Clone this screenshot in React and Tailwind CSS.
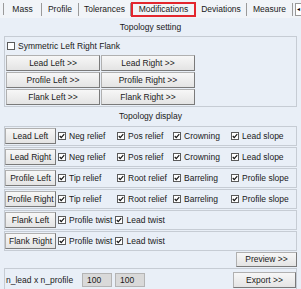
import React from 'react';

const Check = ({ checked = true }) => (
    <span className="w-[8px] h-[8px] border border-[#5a5a5a] bg-white flex items-center justify-center shrink-0">
        {checked && (
            <svg viewBox="0 0 8 8" className="w-[6px] h-[6px]">
                <path d="M1 4 L3 6.2 L7 1.5" stroke="#111" strokeWidth="1.5" fill="none" />
            </svg>
        )}
    </span>
);

const Btn = ({ children, className = '' }) => (
    <div
        className={`flex items-center justify-center bg-gradient-to-b from-[#f7f7f7] to-[#e4e4e4] border border-[#b0b0b0] border-r-[#7a7a7a] border-b-[#7a7a7a] text-[#1a1a1a] whitespace-nowrap ${className}`}
    >
        {children}
    </div>
);

const Item = ({ label }) => (
    <div className="flex items-center gap-[3px] whitespace-nowrap">
        <Check />
        <span>{label}</span>
    </div>
);

const rows = [
    { label: 'Lead Left', items: ['Neg relief', 'Pos relief', 'Crowning', 'Lead slope'] },
    { label: 'Lead Right', items: ['Neg relief', 'Pos relief', 'Crowning', 'Lead slope'] },
    { label: 'Profile Left', items: ['Tip relief', 'Root relief', 'Barreling', 'Profile slope'] },
    { label: 'Profile Right', items: ['Tip relief', 'Root relief', 'Barreling', 'Profile slope'] },
    { label: 'Flank Left', flank: true, items: ['Profile twist', 'Lead twist'] },
    { label: 'Flank Right', flank: true, items: ['Profile twist', 'Lead twist'] },
];

const tabs = [
    { name: 'Mass', w: 'w-[38px]' },
    { name: 'Profile', w: 'w-[37px]' },
    { name: 'Tolerances', w: 'w-[52px]' },
    { name: 'Modifications', w: 'w-[65px]', active: true },
    { name: 'Deviations', w: 'w-[51px]' },
    { name: 'Measure', w: 'w-[46px]' },
];

const App = () => {
    return (
        <div
            className="w-[301px] h-[289px] overflow-hidden bg-[#e9eff7] text-[8.5px] text-[#1a1a1a]"
            style={{ fontFamily: '"Liberation Sans", Arial, sans-serif' }}
        >
            {/* tab strip */}
            <div className="h-[18px] flex items-stretch bg-[#f1f4f8]">
                <div className="w-[4px] border-r border-[#9a9a9a] my-[3px]" />
                {tabs.map(t => (
                    t.active ? (
                        <div key={t.name} className={`${t.w} flex items-center justify-center border-2 border-[#e3262e] my-[2px] mb-[1px]`}>
                            {t.name}
                        </div>
                    ) : (
                        <div key={t.name} className={`${t.w} flex items-center justify-center`}>
                            <span className="flex-1 text-center">{t.name}</span>
                            <span className="w-px h-[13px] bg-[#9a9a9a]" />
                        </div>
                    )
                ))}
                <div className="flex items-center pl-[2px]">
                    <span className="w-[6px] h-[13px] bg-white border border-[#999] border-r-0 flex items-center justify-center text-[6px] text-black">◂</span>
                </div>
            </div>

            <div className="px-[4px]">
                <div className="h-[18px] flex items-center justify-center">Topology setting</div>

                {/* topology setting group */}
                <div className="border border-[#c6ccd4] pb-[1px]">
                    <div className="h-[18px] flex items-center pl-[2px] gap-[3px]">
                        <Check checked={false} />
                        <span>Symmetric Left Right Flank</span>
                    </div>
                    <div className="grid grid-cols-[94px_94px] gap-x-[1px] gap-y-[1px] pl-[1px]">
                        <Btn className="h-[16px]">Lead Left &gt;&gt;</Btn>
                        <Btn className="h-[16px]">Lead Right &gt;&gt;</Btn>
                        <Btn className="h-[16px]">Profile Left &gt;&gt;</Btn>
                        <Btn className="h-[16px]">Profile Right &gt;&gt;</Btn>
                        <Btn className="h-[16px]">Flank Left &gt;&gt;</Btn>
                        <Btn className="h-[16px]">Flank Right &gt;&gt;</Btn>
                    </div>
                </div>

                <div className="h-[19px] flex items-center justify-center">Topology display</div>

                {/* topology display rows */}
                <div className="flex flex-col gap-[1px]">
                    {rows.map(r => (
                        <div key={r.label} className="h-[20px] border border-[#c6ccd4] flex items-center">
                            <Btn className="w-[51px] h-[16px]">{r.label}</Btn>
                            {r.flank ? (
                                <div className="ml-[2px] flex items-center gap-[3px]">
                                    {r.items.map(i => <Item key={i} label={i} />)}
                                </div>
                            ) : (
                                <div className="ml-[2px] grid grid-cols-[59px_56px_58px_1fr] items-center">
                                    {r.items.map(i => <Item key={i} label={i} />)}
                                </div>
                            )}
                        </div>
                    ))}
                </div>

                <div className="h-[16px] flex items-center justify-end">
                    <Btn className="w-[61px] h-[15px] mt-[1px]">Preview &gt;&gt;</Btn>
                </div>

                <div className="mt-[1px] border border-[#c6ccd4] h-[24px] flex items-center">
                    <span className="w-[77px] pl-[1px]">n_lead x n_profile</span>
                    <span className="w-[30px] h-[14px] bg-[#d9d9d9] border border-[#b4b4b4] flex items-center pl-[4px]">100</span>
                    <span className="ml-[3px] w-[30px] h-[14px] bg-[#d9d9d9] border border-[#b4b4b4] flex items-center pl-[4px]">100</span>
                    <div className="flex-1" />
                    <Btn className="w-[63px] h-[16px]">Export &gt;&gt;</Btn>
                </div>
            </div>
        </div>
    );
};

export default App;
